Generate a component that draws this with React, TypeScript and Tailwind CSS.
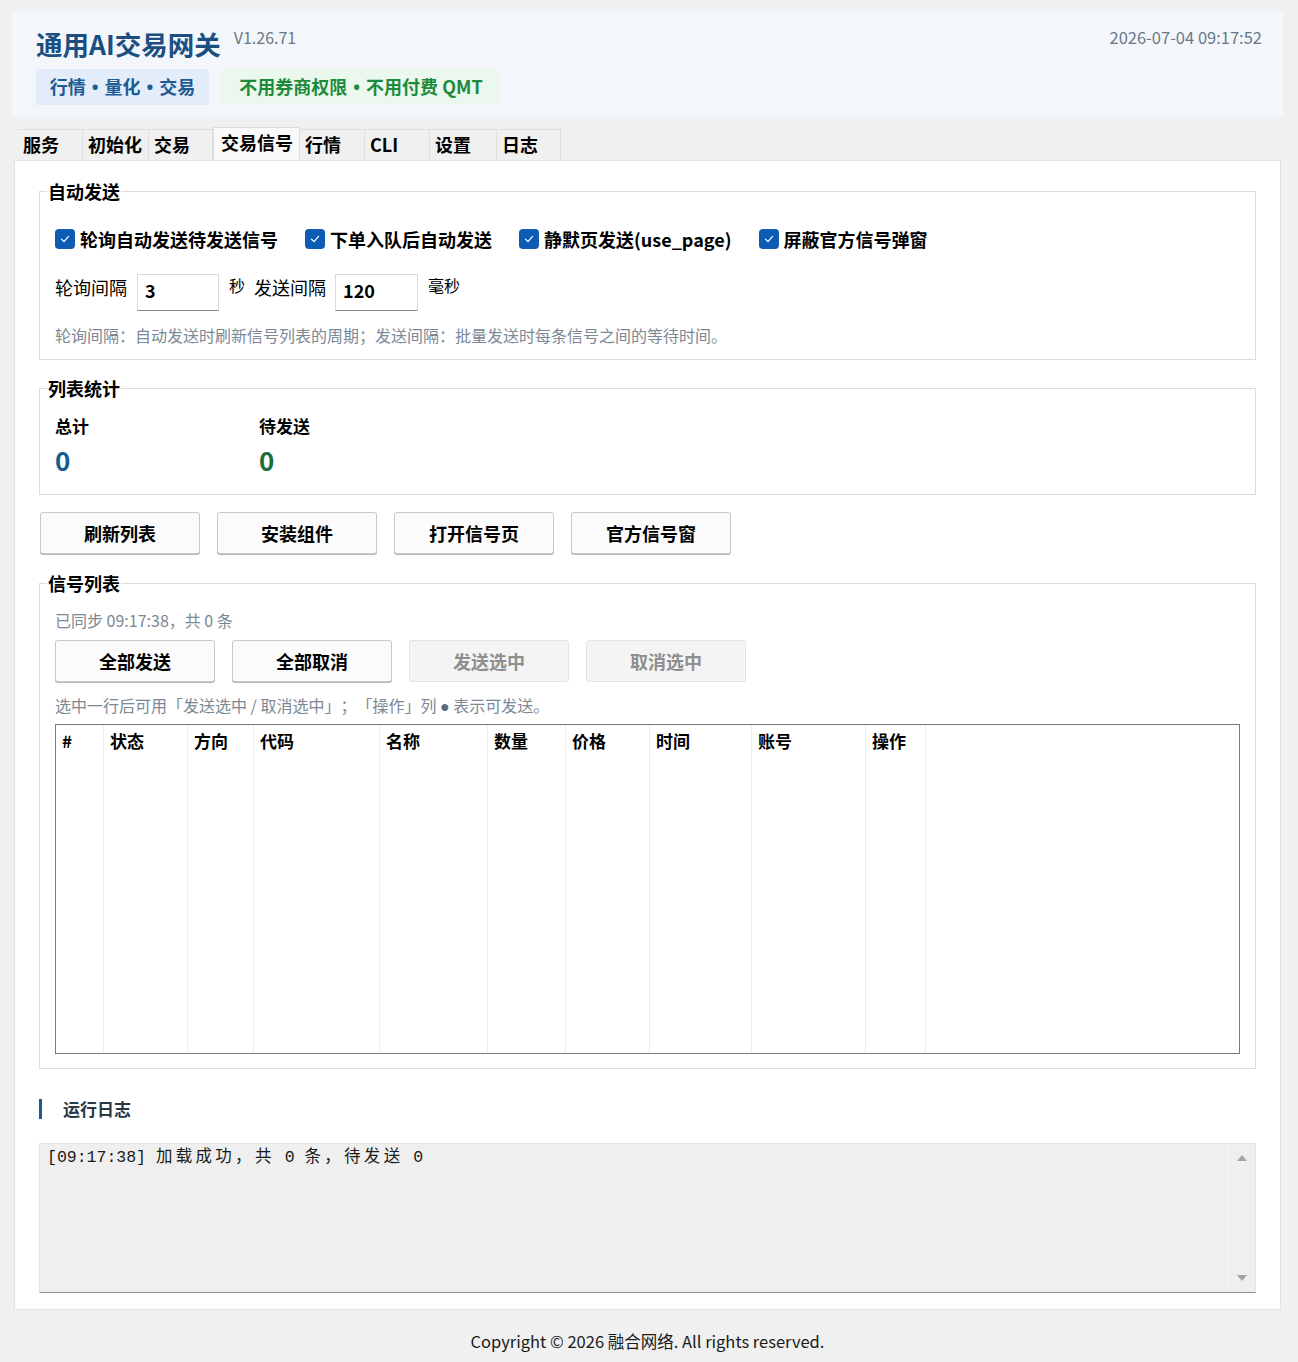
import React from "react";

const tabs = [
  { label: "服务", w: "w-[65px]" },
  { label: "初始化", w: "w-[66px]" },
  { label: "交易", w: "w-[64px]" },
  { label: "交易信号", w: "w-[87px]", active: true },
  { label: "行情", w: "w-[65px]" },
  { label: "CLI", w: "w-[65px]" },
  { label: "设置", w: "w-[67px]" },
  { label: "日志", w: "w-[64px]" },
];

const columns = [
  { label: "#", w: "w-[48px]" },
  { label: "状态", w: "w-[84px]" },
  { label: "方向", w: "w-[66px]" },
  { label: "代码", w: "w-[126px]" },
  { label: "名称", w: "w-[108px]" },
  { label: "数量", w: "w-[78px]" },
  { label: "价格", w: "w-[84px]" },
  { label: "时间", w: "w-[102px]" },
  { label: "账号", w: "w-[114px]" },
  { label: "操作", w: "w-[60px]" },
];

function Check({ label }: { label: string }) {
  return (
    <label className="flex items-center gap-[5px]">
      <span className="flex h-[20px] w-[20px] items-center justify-center rounded-[4px] bg-[#0c5cb6]">
        <svg width="12" height="12" viewBox="0 0 12 12" fill="none">
          <path d="M2.5 6.2 L5 8.6 L9.6 3.4" stroke="white" strokeWidth="1.2" strokeLinecap="round" strokeLinejoin="round" />
        </svg>
      </span>
      <span className="text-[18px] font-bold leading-[26px] text-black">{label}</span>
    </label>
  );
}

function Btn({ children, disabled }: { children: React.ReactNode; disabled?: boolean }) {
  return (
    <button
      className={
        disabled
          ? "h-[42px] w-[160px] rounded-[3px] border border-[#e3e3e3] bg-[#f4f4f4] text-[18px] font-bold text-[#8e8e8e]"
          : "h-[42px] w-[160px] rounded-[3px] border border-[#c9c9c9] bg-[#fbfbfb] text-[18px] font-bold text-black shadow-[0_1px_0_#b5b5b5]"
      }
    >
      {children}
    </button>
  );
}

function Box({ title, children, className }: { title: string; children: React.ReactNode; className?: string }) {
  return (
    <fieldset className={`border border-[#dcdcdc] px-[15px] ${className ?? ""}`}>
      <legend className="-ml-[8px] px-[1px] text-[18px] font-bold leading-[24px] text-black">{title}</legend>
      {children}
    </fieldset>
  );
}

function Dot() {
  return <span className="px-[6px] font-['Noto_Sans',sans-serif]">•</span>;
}

// CJK runs in the log take two mono cells each
function Wide({ children }: { children: React.ReactNode }) {
  return <span className="tracking-[3.3px]">{children}</span>;
}

export default function App() {
  return (
    <div className="min-h-[1362px] bg-[#f0f0f0] pl-[12px] pt-[11px] font-['Noto_Sans_CJK_SC','Noto_Sans',sans-serif] text-black [text-spacing-trim:space-all]">
      {/* header */}
      <header className="flex w-[1271px] justify-between bg-[#f3f7fc] pb-[12px] pl-[24px] pr-[21px] pt-[15px]">
        <div>
          <div className="flex items-start gap-[13px]">
            <h1 className="text-[26.5px] font-bold leading-[36px] text-[#1b4f80]">通用AI交易网关</h1>
            <span className="text-[16px] leading-[22px] text-[#6b7785]">V1.26.71</span>
          </div>
          <div className="mt-[7px] flex gap-[13px]">
            <span className="flex h-[36px] w-[173px] items-center justify-center bg-[#e3edf9] text-[18px] font-bold text-[#1f5b93]">
              <span>行情<Dot />量化<Dot />交易</span>
            </span>
            <span className="flex h-[36px] w-[278px] items-center justify-center bg-[#eaf8ee] text-[18px] font-bold text-[#1e8a3b]">
              <span>不用券商权限<Dot />不用付费 QMT</span>
            </span>
          </div>
        </div>
        <div className="text-[16.5px] leading-[22px] text-[#6b7785]">2026-07-04 09:17:52</div>
      </header>

      {/* tabs */}
      <nav className="ml-[6px] mt-[10px] flex h-[33px] items-end">
        {tabs.map((t) =>
          t.active ? (
            <div
              key={t.label}
              className={`${t.w} h-[33px] border-x border-t border-[#dcdcdc] bg-[#fafafa] pl-[7px] text-[18px] font-bold leading-[29px]`}
            >
              {t.label}
            </div>
          ) : (
            <div
              key={t.label}
              className={`${t.w} h-[31px] border-r border-t border-[#dedede] bg-[#f0f0f0] pl-[5px] text-[18px] font-bold leading-[28px]`}
            >
              {t.label}
            </div>
          )
        )}
      </nav>

      {/* main panel */}
      <main className="ml-[2px] w-[1267px] border border-[#e2e2e2] bg-white px-[24px] pb-[16px] pt-[18px]">
        <Box title="自动发送" className="pb-[13px]">
          <div className="flex gap-[27px] pt-[23px]">
            <Check label="轮询自动发送待发送信号" />
            <Check label="下单入队后自动发送" />
            <Check label="静默页发送(use_page)" />
            <Check label="屏蔽官方信号弹窗" />
          </div>
          <div className="mt-[22px] flex items-start text-[18px]">
            <span className="leading-[26px]">轮询间隔</span>
            <div className="ml-[10px] h-[37px] w-[82px] border border-[#dadada] border-b-[#8a8a8a] pl-[7px] text-[18px] font-bold leading-[31px]">3</div>
            <span className="ml-[10px] text-[16px] leading-[22px]">秒</span>
            <span className="ml-[9px] leading-[26px]">发送间隔</span>
            <div className="ml-[9px] h-[37px] w-[83px] border border-[#dadada] border-b-[#8a8a8a] pl-[7px] text-[18px] font-bold leading-[31px]">120</div>
            <span className="ml-[10px] text-[16px] leading-[22px]">毫秒</span>
          </div>
          <p className="mt-[13px] text-[16px] leading-[22px] text-[#7c8894]">
            轮询间隔：自动发送时刷新信号列表的周期；发送间隔：批量发送时每条信号之间的等待时间。
          </p>
        </Box>

        <Box title="列表统计" className="mt-[16px] pb-[18px]">
          <div className="flex pt-[14px]">
            <div className="w-[204px]">
              <div className="text-[17px] font-bold leading-[24px]">总计</div>
              <div className="mt-[6px] text-[26px] font-bold leading-[32px] text-[#155a91]">0</div>
            </div>
            <div>
              <div className="text-[17px] font-bold leading-[24px]">待发送</div>
              <div className="mt-[6px] text-[26px] font-bold leading-[32px] text-[#1b6e3b]">0</div>
            </div>
          </div>
        </Box>

        <div className="ml-[1px] mt-[17px] flex gap-[17px]">
          <Btn>刷新列表</Btn>
          <Btn>安装组件</Btn>
          <Btn>打开信号页</Btn>
          <Btn>官方信号窗</Btn>
        </div>

        <Box title="信号列表" className="mt-[17px] pb-[14px]">
          <p className="pt-[14px] text-[16px] leading-[22px] text-[#7c8894]">已同步 09:17:38，共 0 条</p>
          <div className="mt-[9px] flex gap-[17px]">
            <Btn>全部发送</Btn>
            <Btn>全部取消</Btn>
            <Btn disabled>发送选中</Btn>
            <Btn disabled>取消选中</Btn>
          </div>
          <p className="mt-[12px] text-[16px] leading-[22px] text-[#7c8894]">
            选中一行后可用「发送选中 / 取消选中」；「操作」列 <span className="font-['Noto_Sans',sans-serif] text-[#5a6b7c]">●</span> 表示可发送。
          </p>
          <div className="mt-[7px] flex h-[330px] border border-[#7a7a7a]">
            {columns.map((c) => (
              <div key={c.label} className={`${c.w} border-r border-[#e6edf5] pl-[6px] pt-[4px] text-[17px] font-bold leading-[24px]`}>
                {c.label}
              </div>
            ))}
            <div className="flex-1" />
          </div>
        </Box>

        <div className="mt-[30px] flex items-center">
          <span className="h-[20px] w-[3px] bg-[#1d5b94]" />
          <h2 className="ml-[21px] text-[17px] font-bold leading-[20px] text-[#2a3846]">运行日志</h2>
        </div>

        <div className="mt-[24px] flex h-[150px] border border-[#e4e4e4] border-b-[#8c8c8c] bg-[#efefef]">
          <pre className="flex-1 pl-[7px] pt-[2px] font-['Liberation_Mono','Noto_Sans_CJK_SC',monospace] text-[16.5px] leading-[24px] text-[#1a1a1a]">
            [09:17:38] <Wide>加载成功，共</Wide> 0 <Wide>条，待发送</Wide> 0
          </pre>
          <div className="flex w-[27px] flex-col items-center justify-between border-l border-[#f8f8f8] py-[10px]">
            <svg width="12" height="8" viewBox="0 0 12 8">
              <path d="M6 1 L11 7 L1 7 Z" fill="#a4a4a4" />
            </svg>
            <svg width="12" height="8" viewBox="0 0 12 8">
              <path d="M1 1 L11 1 L6 7 Z" fill="#a4a4a4" />
            </svg>
          </div>
        </div>
      </main>

      <footer className="mt-[20px] w-[1271px] text-center text-[16.5px] leading-[22px] text-[#1a1a1a]">
        Copyright © 2026 融合网络. All rights reserved.
      </footer>
    </div>
  );
}
